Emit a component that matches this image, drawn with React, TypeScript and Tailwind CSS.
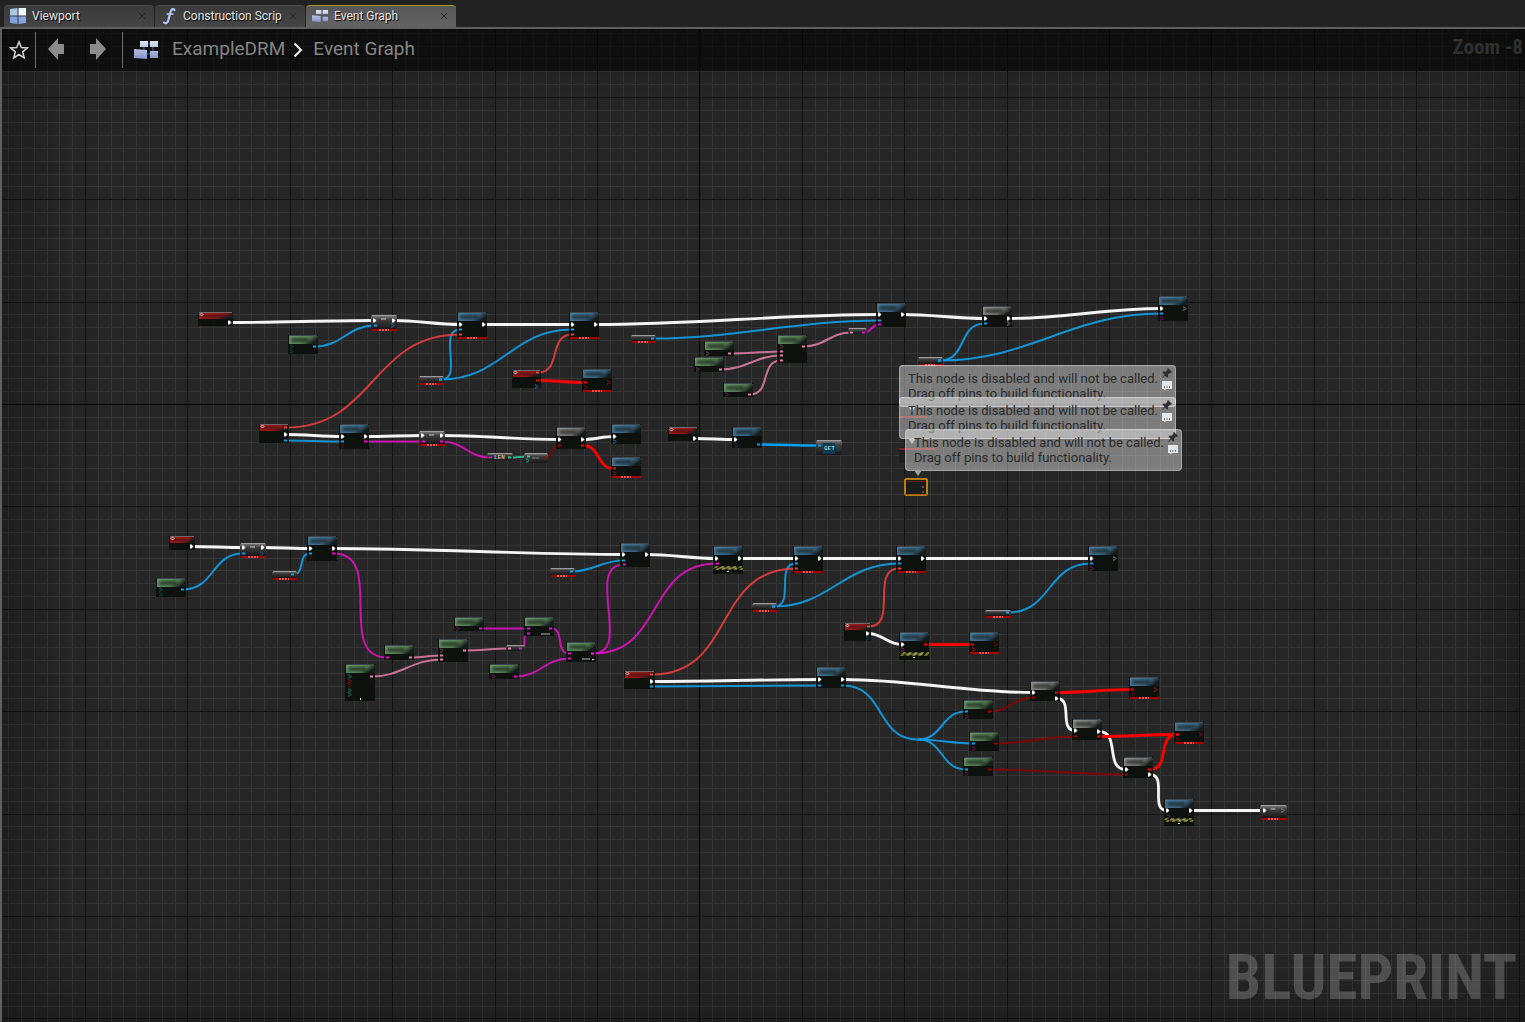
import React from 'react';
import { clsx } from 'clsx';

type NodeKind = 'event' | 'func' | 'pure' | 'branch' | 'pill';
type Extra = 'error' | 'dev';
type GraphNode = [kind: NodeKind, x: number, y: number, w: number, h: number, extra?: Extra];

type WireKind = 'exec' | 'hot' | 'blue' | 'flow' | 'delegate' | 'bool' | 'pink' | 'name' | 'int';
type Wire = [kind: WireKind, x1: number, y1: number, x2: number, y2: number, open?: 'start' | 'end'];

const NODES: GraphNode[] = [
  ['event', 198, 312, 35, 14],
  ['pure', 288, 335, 30, 19],
  ['pill', 371, 315, 26, 16, 'error'],
  ['func', 457, 312, 30, 27, 'error'],
  ['pill', 419, 376, 25, 9, 'error'],
  ['event', 259, 424, 30, 19],
  ['func', 339, 424, 30, 25],
  ['pill', 419, 431, 26, 15, 'error'],
  ['func', 569, 312, 30, 27, 'error'],
  ['event', 512, 370, 29, 18],
  ['func', 582, 369, 30, 23, 'error'],
  ['pill', 631, 335, 25, 8, 'error'],
  ['pure', 704, 341, 30, 15],
  ['pure', 694, 357, 30, 15],
  ['pure', 723, 383, 30, 14],
  ['pure', 777, 335, 30, 28],
  ['branch', 556, 427, 30, 22],
  ['func', 611, 424, 30, 20],
  ['func', 611, 457, 30, 21, 'error'],
  ['event', 668, 427, 30, 14],
  ['func', 732, 427, 30, 21],
  ['pill', 487, 453, 26, 7],
  ['pill', 524, 453, 24, 10],
  ['pill', 816, 440, 26, 15],
  ['func', 876, 303, 30, 24],
  ['pill', 848, 328, 19, 6],
  ['branch', 982, 306, 30, 21],
  ['func', 1158, 296, 30, 25],
  ['pill', 918, 357, 25, 9, 'error'],
  ['event', 169, 536, 26, 14],
  ['pure', 156, 578, 30, 19],
  ['pill', 240, 543, 26, 15, 'error'],
  ['func', 307, 536, 30, 25],
  ['pill', 272, 571, 25, 9, 'error'],
  ['pure', 384, 645, 30, 15],
  ['pure', 345, 664, 30, 37],
  ['pure', 438, 639, 30, 23],
  ['pure', 454, 617, 30, 14],
  ['pure', 524, 617, 30, 19],
  ['pure', 566, 642, 30, 20],
  ['pure', 489, 664, 30, 15],
  ['pill', 506, 645, 19, 6],
  ['pill', 550, 568, 25, 9, 'error'],
  ['func', 620, 543, 30, 24],
  ['func', 713, 546, 30, 28, 'dev'],
  ['event', 624, 671, 31, 18],
  ['func', 793, 546, 30, 27, 'error'],
  ['func', 896, 546, 30, 27, 'error'],
  ['func', 1088, 546, 30, 25],
  ['pill', 752, 603, 25, 9, 'error'],
  ['pill', 985, 610, 26, 8, 'error'],
  ['event', 844, 623, 27, 18],
  ['func', 899, 632, 30, 28, 'dev'],
  ['func', 969, 632, 30, 22, 'error'],
  ['func', 816, 667, 30, 21],
  ['branch', 1030, 681, 30, 20],
  ['pure', 963, 700, 30, 19],
  ['pure', 969, 732, 30, 19],
  ['pure', 963, 757, 30, 19],
  ['branch', 1072, 719, 30, 21],
  ['branch', 1123, 757, 30, 21],
  ['func', 1129, 677, 30, 22, 'error'],
  ['func', 1174, 722, 30, 22, 'error'],
  ['func', 1164, 799, 30, 27, 'dev'],
  ['pill', 1260, 805, 27, 15, 'error'],
];

const WIRES: Wire[] = [
  // data wires
  ['blue', 318, 346, 372, 325],
  ['blue', 444, 379, 457, 329],
  ['blue', 444, 379, 569, 329],
  ['blue', 656, 338, 876, 320],
  ['blue', 943, 360, 982, 323],
  ['blue', 943, 360, 1158, 313],
  ['blue', 289, 440, 339, 441],
  ['blue', 186, 589, 240, 553],
  ['blue', 296, 574, 307, 553],
  ['blue', 575, 571, 620, 560],
  ['blue', 777, 606, 793, 563],
  ['blue', 777, 606, 896, 563],
  ['blue', 1011, 612, 1088, 563],
  ['blue', 655, 686, 816, 685],
  ['blue', 846, 685, 918, 739, 'end'],
  ['blue', 918, 739, 963, 711, 'start'],
  ['blue', 918, 739, 970, 743, 'start'],
  ['blue', 918, 739, 963, 769, 'start'],
  ['delegate', 289, 427, 457, 334],
  ['delegate', 541, 372, 569, 334],
  ['delegate', 655, 674, 793, 568],
  ['delegate', 872, 626, 896, 568],
  ['bool', 548, 458, 556, 445],
  ['bool', 993, 711, 1030, 697],
  ['bool', 999, 743, 1072, 736],
  ['bool', 993, 769, 1123, 774],
  ['pink', 733, 353, 778, 351],
  ['pink', 724, 369, 778, 355],
  ['pink', 753, 394, 778, 360],
  ['pink', 807, 346, 848, 332],
  ['pink', 414, 657, 438, 655],
  ['pink', 375, 676, 438, 659],
  ['pink', 468, 650, 506, 648],
  ['name', 867, 332, 876, 324],
  ['name', 369, 441, 420, 441],
  ['name', 445, 441, 487, 457],
  ['name', 337, 553, 384, 657],
  ['name', 484, 628, 525, 628],
  ['name', 524, 648, 525, 633],
  ['name', 554, 628, 566, 653],
  ['name', 519, 676, 566, 658],
  ['name', 596, 653, 621, 564],
  ['name', 596, 653, 714, 563],
  ['int', 513, 457, 525, 456],
  // execution wires
  ['exec', 233, 322, 371, 320],
  ['exec', 397, 320, 457, 324],
  ['exec', 487, 324, 569, 324],
  ['exec', 599, 324, 876, 314],
  ['exec', 906, 314, 982, 318],
  ['exec', 1012, 318, 1158, 308],
  ['exec', 289, 434, 339, 436],
  ['exec', 369, 436, 419, 435],
  ['exec', 445, 435, 556, 439],
  ['exec', 586, 439, 611, 436],
  ['exec', 698, 438, 732, 439],
  ['exec', 195, 546, 240, 547],
  ['exec', 266, 547, 307, 548],
  ['exec', 337, 548, 620, 554],
  ['exec', 650, 554, 713, 558],
  ['exec', 743, 558, 793, 558],
  ['exec', 823, 558, 896, 558],
  ['exec', 926, 558, 1088, 558],
  ['exec', 871, 633, 899, 644],
  ['exec', 655, 681, 816, 679],
  ['exec', 846, 679, 1030, 692],
  ['exec', 1060, 698, 1072, 730],
  ['exec', 1102, 731, 1123, 769],
  ['exec', 1153, 774, 1164, 810],
  ['exec', 1194, 810, 1261, 810],
  ['hot', 541, 380, 582, 382],
  ['hot', 586, 445, 611, 468],
  ['hot', 929, 644, 969, 644],
  ['hot', 1060, 692, 1129, 689],
  ['hot', 1102, 736, 1174, 734],
  ['hot', 1153, 769, 1174, 734],
  ['flow', 762, 444, 816, 445],
];

// pins with nothing attached
const OPEN_PINS: [color: string, x: number, y: number][] = [
  ['#0f4f4f', 291, 346], ['#0f4f4f', 291, 351],
  ['#1583b8', 392, 325], ['#5e1111', 342, 446],
  ['#1583b8', 536, 386], ['#a31515', 608, 382],
  ['#701010', 585, 387], ['#7a4a5a', 707, 353],
  ['#7a4a5a', 697, 369], ['#7b1470', 726, 394],
  ['#7a4a5a', 781, 346], ['#1583b8', 614, 441],
  ['#a31515', 614, 473], ['#3a2a7a', 736, 445],
  ['#27b08a', 527, 460], ['#8a8a8a', 1008, 323],
  ['#8a8a8a', 1184, 308], ['#7b1470', 1161, 318],
  ['#0f6f5f', 160, 589], ['#0f4f4f', 160, 594],
  ['#0e5a80', 261, 553], ['#5e1111', 310, 558],
  ['#1a8a70', 349, 676], ['#a31515', 349, 681],
  ['#701010', 349, 685], ['#1a8a70', 349, 690],
  ['#1a8a70', 349, 694], ['#7a4a5a', 441, 650],
  ['#7b1470', 457, 628], ['#7b1470', 493, 676],
  ['#8a8a8a', 1114, 558], ['#7b1470', 1091, 568],
  ['#0e5a80', 867, 638], ['#b01aa8', 902, 649],
  ['#a31515', 973, 649], ['#701010', 995, 644],
  ['#7b1470', 966, 716], ['#7b1470', 973, 748],
  ['#7b1470', 966, 773], ['#a31515', 1155, 689],
  ['#701010', 1133, 694], ['#a31515', 1200, 734],
  ['#701010', 1177, 739], ['#7b1470', 1168, 816],
  ['#8a8a8a', 1282, 810], ['#0b6480', 838, 448],
];

const WIRE_STYLE: Record<WireKind, { color: string; width: number; opacity: number }> = {
  exec: { color: '#ffffff', width: 2.8, opacity: 0.95 },
  hot: { color: '#fb0000', width: 2.8, opacity: 1 },
  flow: { color: '#00a2f2', width: 2.5, opacity: 1 },
  blue: { color: '#0fa0e8', width: 2, opacity: 0.9 },
  delegate: { color: '#f04040', width: 2, opacity: 0.85 },
  bool: { color: '#8c0000', width: 1.8, opacity: 0.9 },
  pink: { color: '#e47fa9', width: 2, opacity: 0.85 },
  name: { color: '#e80fc8', width: 2, opacity: 0.85 },
  int: { color: '#22c893', width: 2, opacity: 0.9 },
};

const GRID_STEPS = Array.from({ length: 40 }, (_, i) => i);

// wires run from pin to pin, a few pixels inside the node edges
function wirePath([, startX, y1, endX, y2, open]: Wire) {
  const x1 = open === 'start' ? startX : startX - 3;
  const x2 = open === 'end' ? endX : endX + 3;
  const reach = (Math.abs(x2 - x1) + Math.abs(y2 - y1)) / 3;
  return `M${x1} ${y1 + 0.5}C${x1 + reach} ${y1 + 0.5} ${x2 - reach} ${y2 + 0.5} ${x2} ${y2 + 0.5}`;
}

function GridPattern() {
  return (
    <pattern id="grid" x={187} y={404} width={512} height={512} patternUnits="userSpaceOnUse">
      <g shapeRendering="crispEdges">
        {GRID_STEPS.filter((i) => i % 8 !== 0).map((i) => (
          <g key={i} fill="#353535">
            <rect x={Math.ceil(i * 12.8)} y={0} width={1} height={512} />
            <rect x={0} y={Math.round(i * 12.8)} width={512} height={1} />
          </g>
        ))}
        {GRID_STEPS.filter((i) => i % 8 === 0).map((i) => (
          <g key={i} fill="#141414">
            <rect x={Math.ceil(i * 12.8)} y={0} width={1} height={512} />
            <rect x={0} y={Math.round(i * 12.8)} width={512} height={1} />
          </g>
        ))}
      </g>
    </pattern>
  );
}

function HeaderGradient({ id, from, to }: { id: string; from: string; to: string }) {
  return (
    <linearGradient id={id} x1="0" y1="0" x2="1" y2="0.35">
      <stop offset="0" stopColor={from} />
      <stop offset="0.7" stopColor={to} />
      <stop offset="1" stopColor="#151c1a" />
    </linearGradient>
  );
}

function ErrorBar({ x, y, w }: { x: number; y: number; w: number }) {
  const mid = x + Math.floor(w / 2);
  return (
    <g shapeRendering="crispEdges">
      <rect x={x + 1} y={y} width={w - 1} height={2} fill="#a60000" />
      <path d={`M${mid - 5} ${y + 1}h10`} stroke="#ee7a7a" strokeWidth={2} strokeDasharray="2 1" opacity={0.7} />
    </g>
  );
}

function NodeShape({ node }: { node: GraphNode }) {
  const [kind, x, y, w, h, extra] = node;
  const isPill = kind === 'pill';
  const headH = kind === 'event' ? 6 : 8;
  return (
    <g>
      {isPill ? (
        <>
          <rect x={x} y={y} width={w} height={extra ? h - 2 : h} rx={2} fill="url(#pill)" />
          <rect x={x + 1} y={y} width={w - 2} height={1} fill="#aaaaaa" opacity={0.75} />
          {h > 12 && <rect x={x + w / 2 - 3} y={y + 3} width={5} height={2} fill="#bdbdbd" opacity={0.55} />}
        </>
      ) : (
        <>
          <rect x={x} y={y} width={w} height={h} fill="#0c100d" opacity={0.94} />
          <rect x={x + 1} y={y + 1} width={w - 1} height={headH} fill={`url(#${kind})`} />
          <rect x={x + 3} y={y + 3} width={w - 12} height={headH - 4} rx={2} fill="#0b1210" opacity={0.55} filter="url(#soft)" />
          <rect x={x + 1} y={y} width={w - 2} height={1} fill={kind === 'event' ? '#9a9090' : '#56606a'} opacity={0.7} />
          {kind === 'event' && (
            <path d={`M${x + 2} ${y + 2.5}l1.5-1.5l1.5 1.5l-1.5 1.5z`} fill="#3a0808" stroke="#f0dada" strokeWidth={0.9} />
          )}
        </>
      )}
      {extra === 'error' && <ErrorBar x={x} y={y + h - 2} w={w} />}
      {extra === 'dev' && (
        <>
          <rect x={x} y={y + h - 8} width={w} height={4} fill="url(#stripes)" />
          <rect x={x + 6} y={y + h - 7} width={w - 12} height={2} fill="#b8b890" opacity={0.4} />
          <rect x={x + w / 2 - 1} y={y + h - 3} width={2} height={1} fill="#dddddd" />
        </>
      )}
    </g>
  );
}

function Pin({ kind, x, y }: { kind: WireKind; x: number; y: number }) {
  const { color } = WIRE_STYLE[kind];
  if (kind === 'exec') {
    return <path d={`M${x - 1} ${y - 1.5}h1.5l2 2l-2 2h-1.5z`} fill={color} />;
  }
  return <rect x={x - 1} y={y - 0.5} width={3} height={2} fill={kind === 'bool' ? '#a00000' : color} />;
}

function GraphDrawing() {
  return (
    <svg className="absolute inset-0 h-full w-full" role="img" aria-label="Blueprint nodes">
      <defs>
        <GridPattern />
        <HeaderGradient id="event" from="#a51a1a" to="#8c1616" />
        <HeaderGradient id="func" from="#4a7898" to="#3a6381" />
        <HeaderGradient id="pure" from="#65936a" to="#527a50" />
        <HeaderGradient id="branch" from="#8e8e8e" to="#707070" />
        <linearGradient id="pill" x1="0" y1="0" x2="0" y2="1">
          <stop offset="0" stopColor="#858585" />
          <stop offset="0.35" stopColor="#3c3c3c" />
          <stop offset="1" stopColor="#161616" />
        </linearGradient>
        <pattern id="stripes" width="6" height="4" patternUnits="userSpaceOnUse">
          <rect width="6" height="4" fill="#14160a" />
          <path d="M0 4L3 0h3L3 4z" fill="#77781d" />
        </pattern>
        <filter id="soft">
          <feGaussianBlur stdDeviation="1" />
        </filter>
      </defs>
      {/* graph space starts above the canvas, behind the tab strip */}
      <g transform="translate(-2 -29)">
        <rect width="100%" height="110%" fill="url(#grid)" />
        <rect x={699} y={0} width={1} height="110%" fill="#000000" />
        <rect x={0} y={404} width="110%" height={1} fill="#000000" />

        <g fill="none">
          {WIRES.map((wire, i) => {
            const style = WIRE_STYLE[wire[0]];
            return (
              <path key={i} d={wirePath(wire)} stroke={style.color} strokeWidth={style.width} opacity={style.opacity} />
            );
          })}
        </g>

        {NODES.map((node, i) => (
          <NodeShape key={i} node={node} />
        ))}

        {OPEN_PINS.map(([color, x, y], i) => (
          <path key={i} d={`M${x - 1} ${y - 1}h1.5l1.5 1.5l-1.5 1.5h-1.5`} fill="none" stroke={color} />
        ))}

        {WIRES.map(([kind, x1, y1, x2, y2, open], i) => (
          <g key={i}>
            {open !== 'start' && <Pin kind={kind} x={x1 - 4} y={y1} />}
            {open !== 'end' && <Pin kind={kind} x={x2 + 3} y={y2} />}
          </g>
        ))}

        <text x={494} y={459} className="fill-[#b5b5b5] font-mono text-[6px] font-bold">LEN</text>
        <text x={532} y={460} className="fill-[#8a8a8a] font-mono text-[6px] font-bold">==</text>
        <rect x={823} y={443} width={12} height={11} fill="#0d3b50" />
        <text x={824} y={450} className="fill-[#8ac4dc] font-mono text-[6px] font-bold">GET</text>
        <rect x={541} y={633} width={9} height={2} fill="#9a9a9a" opacity={0.6} />
        <rect x={582} y={658} width={8} height={2} fill="#9a9a9a" opacity={0.6} />
        <rect x={592} y={659} width={2} height={1} fill="#ffffff" />
        <rect x={360} y={698} width={1} height={2} fill="#dddddd" />

        {/* disabled events */}
        <g opacity={0.7}>
          <rect x={899} y={415} width={28} height={14} fill="#1b1b1b" />
          <rect x={899} y={416} width={28} height={2} fill="#a81c1c" />
          <rect x={899} y={447} width={36} height={16} fill="#1b1b1b" />
          <rect x={899} y={448} width={36} height={2} fill="#a81c1c" />
        </g>
        <rect x={905} y={479} width={22} height={16} rx={1} fill="#1c1c1c" stroke="#e39a0c" strokeWidth={1.6} />
        <rect x={907} y={481} width={18} height={1} fill="#5a1c1c" />
        <rect x={905} y={494} width={22} height={1} fill="#a65c08" />
        <rect x={922} y={486} width={2} height={2} fill="#555555" />
        <rect x={922} y={491} width={2} height={2} fill="#3d5228" />
      </g>
    </svg>
  );
}

function GraphIcon({ className }: { className?: string }) {
  return (
    <svg viewBox="0 0 24 20" className={className} aria-hidden="true">
      <defs>
        <linearGradient id="tile" x1="0" y1="0" x2="0" y2="1">
          <stop offset="0" stopColor="#dde4f6" />
          <stop offset="1" stopColor="#8492c9" />
        </linearGradient>
      </defs>
      <path d="M10 7v4M19 6v6M13 4h4M11 14h6" stroke="#56627f" strokeWidth="1" />
      <path d="M6 1h8v6H6zM16 1h8v6h-8zM16 11h8v7h-8zM0 9l13 1v9L0 18z" fill="url(#tile)" />
    </svg>
  );
}

function ViewportIcon() {
  return (
    <svg viewBox="0 0 15 15" className="h-4 w-4" aria-hidden="true">
      <path d="M0 1l7-1v7H0z" fill="#a9c6e4" />
      <path d="M8 0h7v7H8z" fill="#eefafc" />
      <path d="M0 8h7v7l-7-1z" fill="#7fa0d8" />
      <path d="M8 8h7v6l-7 1z" fill="#86a6e0" />
    </svg>
  );
}

function FunctionIcon() {
  return (
    <svg viewBox="0 0 16 18" className="h-[18px] w-4" aria-hidden="true">
      <path
        d="M13.500 3.200C13 1.500 10.600 1.500 9.700 4.500L7.200 13.500C6.500 16 4.500 17 3 15.500"
        fill="none"
        stroke="#b4c8f6"
        strokeWidth="2.200"
        strokeLinecap="round"
      />
      <path d="M5.500 7h7" stroke="#b4c8f6" strokeWidth="1.500" />
    </svg>
  );
}

interface TabProps {
  label: string;
  icon: React.ReactNode;
  active?: boolean;
}

function Tab({ label, icon, active = false }: TabProps) {
  return (
    <div
      className={clsx(
        'flex h-[22px] w-[150px] items-center rounded-t-sm border-t pr-2 pb-0.5 pl-1.5',
        active
          ? 'border-[#a89a20] bg-linear-to-b from-[#565656] to-[#646464]'
          : 'border-[#4a4a4a] bg-linear-to-b from-[#3a3a3a] to-[#454545]'
      )}
    >
      <button
        type="button"
        role="tab"
        aria-selected={active}
        className="flex min-w-0 flex-1 items-center gap-1.5 text-xs whitespace-nowrap text-[#e2e2e2] [text-shadow:1px_1px_1px_#000]"
      >
        {icon}
        {label}
      </button>
      <button type="button" aria-label={`Close ${label}`} className="text-[#262626]">
        <svg viewBox="0 0 8 8" className="h-2 w-2" aria-hidden="true">
          <path d="M1 1l6 6M7 1L1 7" stroke="currentColor" strokeWidth="1" />
        </svg>
      </button>
    </div>
  );
}

function Arrow({ flip = false }: { flip?: boolean }) {
  return (
    <svg viewBox="0 0 18 24" className={clsx('h-6 w-[18px]', flip && '-scale-x-100')} aria-hidden="true">
      <path d="M1 11L11 0v6h6v10h-6v6z" fill="#8b8b8b" />
    </svg>
  );
}

function Toolbar() {
  return (
    <div className="relative flex h-[42px] items-center bg-black/55">
      <button type="button" aria-label="Favorite" className="flex w-[33px] justify-center">
        <svg viewBox="0 0 20 20" className="h-5 w-5" aria-hidden="true">
          <path
            d="M10 1.8l2.3 5.7 6.1.4-4.7 3.9 1.5 6-5.2-3.3-5.2 3.3 1.5-6L1.6 7.9l6.1-.4z"
            fill="none"
            stroke="#d2d2d2"
            strokeWidth="1.5"
          />
        </svg>
      </button>
      <div className="h-9 w-px bg-[#6a6a6a]" />
      <button type="button" aria-label="Back" className="ml-[11px]">
        <Arrow />
      </button>
      <button type="button" aria-label="Forward" className="ml-6">
        <Arrow flip />
      </button>
      <div className="ml-[15px] h-9 w-px bg-[#6a6a6a]" />
      <GraphIcon className="ml-[11px] h-5 w-6" />
      <nav className="ml-3.5 flex items-center pb-0.5 text-[19px] text-[#858585]" aria-label="Breadcrumb">
        <a href="#blueprint">ExampleDRM</a>
        <svg viewBox="0 0 10 16" className="mt-0.5 mr-2.5 ml-2 h-4 w-2.5" aria-hidden="true">
          <path d="M1.5 1.5L8 8l-6.500 6.500" fill="none" stroke="#f2f2f2" strokeWidth="2" />
        </svg>
        <a href="#event-graph" aria-current="page">Event Graph</a>
      </nav>
      <span className="ml-auto pr-0.5 pb-1 font-['Roboto_Condensed','Liberation_Sans_Narrow',Roboto,sans-serif] text-[21px] font-bold text-[#303030]">
        Zoom -8
      </span>
    </div>
  );
}

function DisabledNote({ className }: { className: string }) {
  return (
    <div
      className={clsx(
        'absolute flex h-[42px] w-[277px] justify-between rounded border border-white/35 bg-white/40 pt-[5px] pr-0.5 pl-2',
        className
      )}
    >
      <p className="text-[13px] leading-[15px] whitespace-nowrap text-[#2a2a2a]">
        This node is disabled and will not be called.
        <br />
        Drag off pins to build functionality.
      </p>
      <div className="-mt-1 flex flex-col items-center gap-0.5">
        <button type="button" aria-label="Pin note">
          <svg viewBox="0 0 12 12" className="h-3 w-3" aria-hidden="true">
            <path d="M7 1l4 4-1 1-1-.3-2 2 .2 2-1 1-2.300-2.300L1.500 11 1 10.500 3.500 7.700 1.500 5.600l1-1 2 .2 2-2L6 2z" fill="#303030" />
          </svg>
        </button>
        <button type="button" aria-label="Toggle note">
          <svg viewBox="0 0 12 10" className="h-2.5 w-3" aria-hidden="true">
            <path d="M1 0h10v8H5L3.500 9.500 3 8H1z" fill="#e2e8ec" />
            <path d="M3 6h1M5.500 6h1M8 6h1" stroke="#555b60" strokeWidth="1.500" />
          </svg>
        </button>
      </div>
      <svg viewBox="0 0 8 6" className="absolute top-full left-2 h-1.5 w-2" aria-hidden="true">
        <path d="M0 0h8L4 6z" fill="#a0a0a0" />
      </svg>
    </div>
  );
}

export default function App() {
  return (
    <div className="flex h-screen flex-col overflow-hidden bg-[#222222] font-[Roboto,sans-serif]">
      <div className="flex shrink-0 gap-px pt-[5px] pl-1" role="tablist">
        <Tab label="Viewport" icon={<ViewportIcon />} />
        <Tab label="Construction Scrip" icon={<FunctionIcon />} />
        <Tab label="Event Graph" icon={<GraphIcon className="h-3.5 w-4" />} active />
      </div>
      <main className="relative flex-1 overflow-hidden border-t-2 border-l-2 border-[#606060] bg-[#262626]">
        <GraphDrawing />
        <div className="pointer-events-none absolute inset-0 shadow-[inset_0_0_90px_rgba(0,0,0,0.4)]" />
        <Toolbar />
        <DisabledNote className="top-[336px] left-[897px]" />
        <DisabledNote className="top-[368px] left-[897px]" />
        <DisabledNote className="top-[400px] left-[903px]" />
        <div className="pointer-events-none absolute right-2 bottom-2 font-['Roboto_Condensed','Liberation_Sans_Narrow',Roboto,sans-serif] text-[63px] leading-[72px] font-bold text-white/20">
          BLUEPRINT
        </div>
      </main>
    </div>
  );
}
